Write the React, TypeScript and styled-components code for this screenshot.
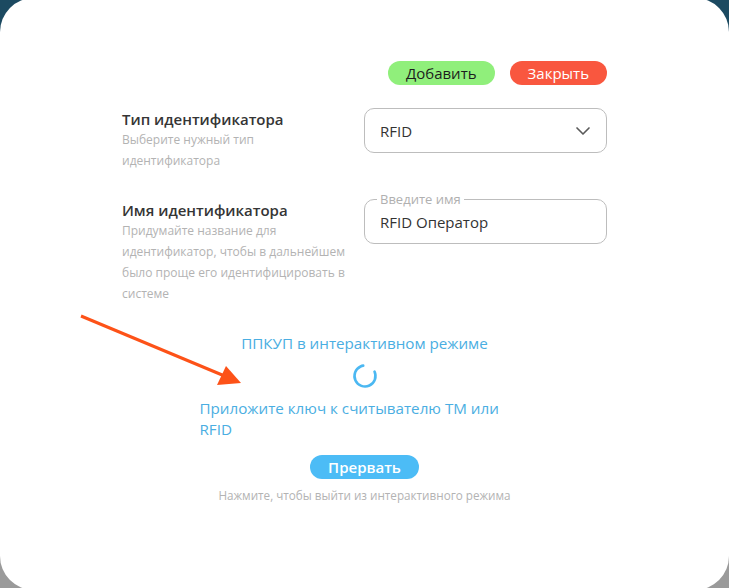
import React from "react";
import styled, { createGlobalStyle } from "styled-components";

const GlobalStyle = createGlobalStyle`
    html {
        min-height: 100%;
        background: linear-gradient(to bottom, #1c4a61 0%, #1c4a61 50%, #9a9a9a 50%, #9a9a9a 100%);
    }
    body {
        margin: 0;
        padding: 0;
        height: 588px;
        overflow: hidden;
        font-family: "Open Sans", "Noto Sans", sans-serif;
    }
`

const App = () => {
    return (
        <>
            <GlobalStyle />
            <Card>
                <Content>
                    <Actions>
                        <PillButton tone="green">Добавить</PillButton>
                        <PillButton tone="red">Закрыть</PillButton>
                    </Actions>

                    <FormRow>
                        <Label>
                            <LabelTitle>Тип идентификатора</LabelTitle>
                            <LabelHint>Выберите нужный тип идентификатора</LabelHint>
                        </Label>
                        <Select>
                            <span>RFID</span>
                            <svg width="18" height="18" viewBox="0 0 24 24" fill="none">
                                <path d="M4 8l8 8 8-8" stroke="#5a5a5a" strokeWidth="2.2" strokeLinecap="round" strokeLinejoin="round" />
                            </svg>
                        </Select>
                    </FormRow>

                    <FormRow second>
                        <Label offset>
                            <LabelTitle>Имя идентификатора</LabelTitle>
                            <LabelHint>
                                Придумайте название для идентификатор, чтобы в дальнейшем было проще его идентифицировать в системе
                            </LabelHint>
                        </Label>
                        <Field>
                            <Legend>Введите имя</Legend>
                            <FieldValue>RFID Оператор</FieldValue>
                        </Field>
                    </FormRow>
                </Content>

                <Interactive>
                    <InteractiveTitle>ППКУП в интерактивном режиме</InteractiveTitle>
                    <Spinner width="26" height="26" viewBox="0 0 26 26">
                        <circle
                            cx="13" cy="13" r="10.5"
                            fill="none" stroke="#4bb8f2" strokeWidth="2.6"
                            strokeDasharray="52 14" strokeLinecap="round"
                            transform="rotate(-25 13 13)"
                        />
                    </Spinner>
                    <Prompt>Приложите ключ к считывателю ТМ или RFID</Prompt>
                    <AbortButton>Прервать</AbortButton>
                    <Note>Нажмите, чтобы выйти из интерактивного режима</Note>
                </Interactive>

                <Pointer width="180" height="90" viewBox="0 0 180 90">
                    <line x1="2" y1="2" x2="148" y2="63" stroke="#fd5218" strokeWidth="3" />
                    <polygon points="162,69 138,71 147,52" fill="#fd5218" />
                </Pointer>
            </Card>
        </>
    )
}

const Card = styled.div`
    position: relative;
    box-sizing: border-box;
    height: 592px;
    margin-top: -2px;
    background: #fff;
    border-radius: 34px;
    overflow: hidden;
`

const Content = styled.div`
    width: 485px;
    margin: 0 auto;
    padding-top: 63px;
`

const Actions = styled.div`
    display: flex;
    justify-content: flex-end;
    gap: 15px;
    margin-bottom: 23px;
`

const PillButton = styled.button<{ tone: "green" | "red" }>`
    height: 24px;
    padding: 0 18px;
    border: none;
    border-radius: 12px;
    font-family: "Open Sans", sans-serif;
    font-size: 15px;
    line-height: 24px;
    background: ${p => p.tone === "green" ? "#90ef7b" : "#f9573f"};
    color: ${p => p.tone === "green" ? "#1d1d1d" : "#ffffff"};
`

const FormRow = styled.div<{ second?: boolean }>`
    display: flex;
    justify-content: space-between;
    align-items: flex-start;
    margin-top: ${p => p.second ? "18px" : "0"};
`

const Label = styled.div<{ offset?: boolean }>`
    width: 226px;
    padding-top: ${p => p.offset ? "11px" : "1px"};
`

const LabelTitle = styled.div`
    font-size: 15px;
    font-weight: 600;
    line-height: 20px;
    color: #353535;
`

const LabelHint = styled.div`
    font-size: 12px;
    line-height: 21px;
    color: #b3b3b3;
`

const Select = styled.div`
    box-sizing: border-box;
    width: 243px;
    height: 45px;
    display: flex;
    align-items: center;
    justify-content: space-between;
    padding: 0 14px 0 15px;
    border: 1px solid #bdbdbd;
    border-radius: 10px;
    font-size: 15px;
    color: #333;
`

const Field = styled.fieldset`
    box-sizing: border-box;
    width: 243px;
    height: 55px;
    margin: 0;
    padding: 0 15px;
    border: 1px solid #bdbdbd;
    border-radius: 10px;
`

const Legend = styled.legend`
    margin-left: -3px;
    padding: 0 3px;
    font-size: 13px;
    line-height: 20px;
    color: #b0b0b0;
`

const FieldValue = styled.div`
    margin-top: 3px;
    font-size: 15px;
    line-height: 20px;
    color: #333;
`

const Interactive = styled.div`
    display: flex;
    flex-direction: column;
    align-items: center;
    margin-top: 29px;
`

const InteractiveTitle = styled.div`
    font-size: 15.2px;
    line-height: 20px;
    color: #4aaee2;
`

const Spinner = styled.svg`
    margin-top: 10px;
    display: block;
`

const Prompt = styled.div`
    width: 330px;
    margin-top: 9px;
    font-size: 15.2px;
    line-height: 21px;
    color: #4aaee2;
`

const AbortButton = styled.button`
    height: 24px;
    margin-top: 15px;
    padding: 0 18px;
    border: none;
    border-radius: 12px;
    background: #4cbcf6;
    color: #fff;
    font-family: "Open Sans", sans-serif;
    font-size: 15px;
    font-weight: 600;
    line-height: 24px;
`

const Note = styled.div`
    margin-top: 7px;
    font-size: 11.7px;
    line-height: 18px;
    color: #b3b3b3;
`

const Pointer = styled.svg`
    position: absolute;
    left: 79px;
    top: 316px;
`

export default App
